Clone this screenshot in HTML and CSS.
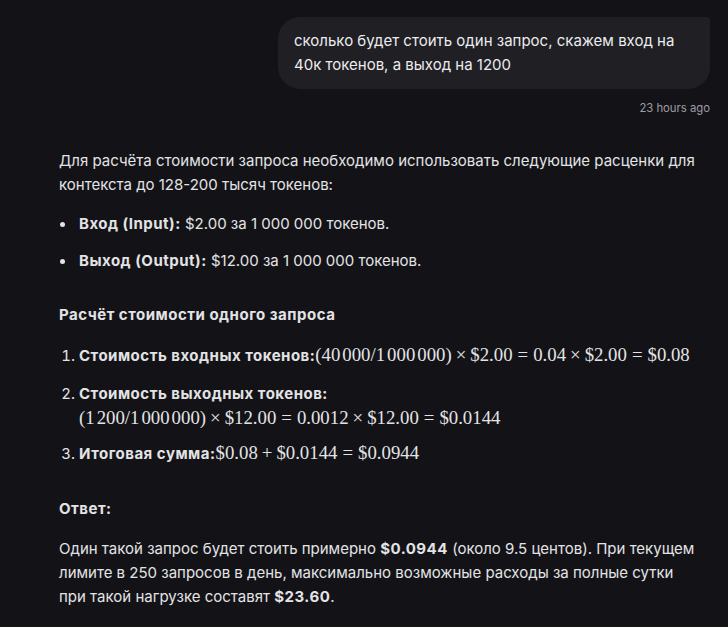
FILE: index.html
```html
<!DOCTYPE html>
<html lang="ru">
<head>
<meta charset="utf-8">
<link rel="stylesheet" href="styles.css">
</head>
<body>
<div class="chat">
  <div class="user-row">
    <div class="bubble">сколько будет стоить один запрос, скажем вход на 40к токенов, а выход на 1200</div>
  </div>
  <div class="time">23 hours ago</div>

  <div class="answer">
    <p class="para">Для расчёта стоимости запроса необходимо использовать следующие расценки для контекста до 128-200 тысяч токенов:</p>
    <ul class="bullets">
      <li><b>Вход (Input):</b> $2.00 за 1 000 000 токенов.</li>
      <li><b>Выход (Output):</b> $12.00 за 1 000 000 токенов.</li>
    </ul>
    <h3 class="heading">Расчёт стоимости одного запроса</h3>
    <ol class="steps">
      <li><b>Стоимость входных токенов:</b><span class="math">(40<span class="th"></span>000/1<span class="th"></span>000<span class="th"></span>000)<span class="op">×</span>$2.00<span class="rel">=</span>0.04<span class="op">×</span>$2.00<span class="rel">=</span>$0.08</span></li>
      <li><b>Стоимость выходных токенов:</b><br><span class="math">(1<span class="th"></span>200/1<span class="th"></span>000<span class="th"></span>000)<span class="op">×</span>$12.00<span class="rel">=</span>0.0012<span class="op">×</span>$12.00<span class="rel">=</span>$0.0144</span></li>
      <li><b>Итоговая сумма:</b><span class="math">$0.08<span class="op">+</span>$0.0144<span class="rel">=</span>$0.0944</span></li>
    </ol>
    <h3 class="heading answer-head">Ответ:</h3>
    <p class="para">Один такой запрос будет стоить примерно <b>$0.0944</b> (около 9.5 центов). При текущем лимите в 250 запросов в день, максимально возможные расходы за полные сутки при такой нагрузке составят <b>$23.60</b>.</p>
  </div>
</div>
</body>
</html>
```

FILE: styles.css
```css
html, body {
  margin: 0;
  padding: 0;
  background: #131317;
}
body {
  font-family: Inter, "Noto Sans", sans-serif;
  color: #e3e3e6;
  font-size: 15px;
  line-height: 24px;
}
.chat {
  padding: 17px 18px 0 59px;
}
.user-row {
  display: flex;
  justify-content: flex-end;
}
.bubble {
  background: #1f1f24;
  border-radius: 22px 4px 22px 22px;
  padding: 12px 16px 12px 16px;
  width: 400px;
  font-size: 15px;
  line-height: 24px;
  color: #ececef;
}
.time {
  text-align: right;
  font-size: 11.3px;
  color: #9d9da3;
  margin-top: 11px;
  line-height: 16px;
}
.answer {
  margin-top: 33px;
  padding-right: 8px;
}
.para {
  margin: 0;
}
b {
  font-weight: 700;
  letter-spacing: 0.5px;
}
.bullets {
  margin: 15px 0 0;
  padding-left: 20px;
  list-style: none;
}
.bullets li {
  position: relative;
  margin-bottom: 13px;
}
.bullets li::before {
  content: "";
  position: absolute;
  left: -19px;
  top: 10px;
  width: 5px;
  height: 5px;
  border-radius: 50%;
  background: #e3e3e6;
}
.heading {
  font-size: 15px;
  font-weight: 700;
  letter-spacing: 0.5px;
  margin: 30px 0 0;
  line-height: 24px;
}
.steps {
  margin: 16px 0 0;
  padding-left: 20px;
}
.steps li {
  margin-bottom: 12px;
}
.steps li:nth-child(2) {
  margin-top: 14px;
  margin-bottom: 10px;
}
.math {
  font-family: "Liberation Serif", "DejaVu Serif", serif;
  font-size: 18.8px;
  white-space: nowrap;
}
.th {
  display: inline-block;
  width: 2px;
}
.op {
  margin: 0 4px;
}
.rel {
  margin: 0 5px;
}
.answer-head {
  margin-top: 31px;
}
.heading + .para {
  margin-top: 16px;
}
```
